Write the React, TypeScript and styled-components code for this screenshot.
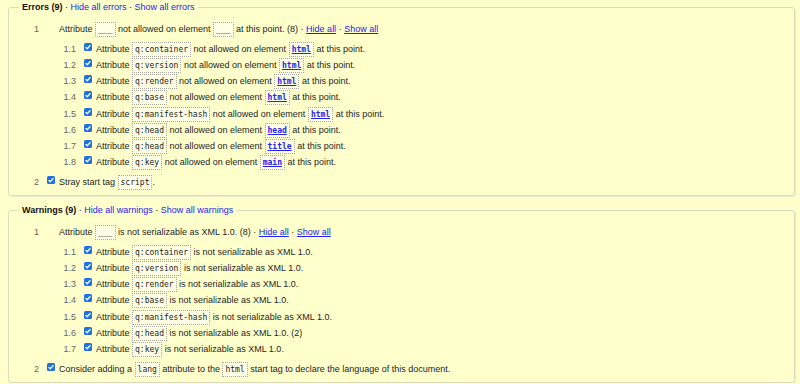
import styled, { createGlobalStyle } from "styled-components";

const GlobalStyle = createGlobalStyle`
  html, body {
    margin: 0;
    padding: 0;
    background: #ffffcc;
  }
  body {
    font-family: "Liberation Sans", Arial, sans-serif;
    font-size: 9px;
    color: #222;
  }
`;

type Part = string | { code: string; link?: boolean };

type Message = {
  num: string;
  parts: Part[];
  checked?: boolean;
};

type Group = {
  num: string;
  parts: Part[];
  count: number;
  subs: Message[];
};

const errorSubs: [string, string][] = [
  ["q:container", "html"],
  ["q:version", "html"],
  ["q:render", "html"],
  ["q:base", "html"],
  ["q:manifest-hash", "html"],
  ["q:head", "head"],
  ["q:head", "title"],
  ["q:key", "main"],
];

const warningSubs: [string, string][] = [
  ["q:container", ""],
  ["q:version", ""],
  ["q:render", ""],
  ["q:base", ""],
  ["q:manifest-hash", ""],
  ["q:head", " (2)"],
  ["q:key", ""],
];

const errorGroup: Group = {
  num: "1",
  parts: ["Attribute", { code: "___" }, "not allowed on element", { code: "___" }, "at this point."],
  count: 8,
  subs: errorSubs.map(([attr, el], i) => ({
    num: `1.${i + 1}`,
    checked: true,
    parts: ["Attribute", { code: attr }, "not allowed on element", { code: el, link: true }, "at this point."],
  })),
};

const warningGroup: Group = {
  num: "1",
  parts: ["Attribute", { code: "___" }, "is not serializable as XML 1.0."],
  count: 8,
  subs: warningSubs.map(([attr, extra], i) => ({
    num: `1.${i + 1}`,
    checked: true,
    parts: ["Attribute", { code: attr }, `is not serializable as XML 1.0.${extra}`],
  })),
};

const errorTail: Message = {
  num: "2",
  checked: true,
  parts: ["Stray start tag", { code: "script" }, "."],
};

const warningTail: Message = {
  num: "2",
  checked: true,
  parts: [
    "Consider adding a",
    { code: "lang" },
    "attribute to the",
    { code: "html" },
    "start tag to declare the language of this document.",
  ],
};

const Check = () => (
  <CheckBox>
    <svg width="8" height="8" viewBox="0 0 8 8">
      <path d="M1.6 4.1 L3.2 5.7 L6.4 2.3" fill="none" stroke="#fff" strokeWidth="1.3" />
    </svg>
  </CheckBox>
);

// words and code boxes joined by single spaces, no space before a full stop
const renderParts = (parts: Part[]) =>
  parts.map((p, i) => {
    if (typeof p === "string") {
      const noSpace = p.startsWith(".") || p.startsWith(" ");
      return (
        <span key={i}>
          {i > 0 && !noSpace ? " " : ""}
          {p}
        </span>
      );
    }
    return (
      <span key={i}>
        {i > 0 ? " " : ""}
        <Code>{p.link ? <CodeLink>{p.code}</CodeLink> : p.code}</Code>
      </span>
    );
  });

const Row = ({ msg, sub }: { msg: Message; sub?: boolean }) => (
  <RowLine sub={sub}>
    <Num>{msg.num}</Num>
    <CheckSlot>{msg.checked && <Check />}</CheckSlot>
    <Text>{renderParts(msg.parts)}</Text>
  </RowLine>
);

const Section = ({
  title,
  count,
  noun,
  group,
  tail,
}: {
  title: string;
  count: number;
  noun: string;
  group: Group;
  tail: Message;
}) => (
  <Fieldset>
    <Legend>
      <b>
        {title} ({count})
      </b>{" "}
      · <Link>Hide all {noun}</Link> · <Link>Show all {noun}</Link>
    </Legend>
    <RowLine>
      <Num>{group.num}</Num>
      <CheckSlot />
      <Text>
        {renderParts(group.parts)} ({group.count}) · <Link underline>Hide all</Link> ·{" "}
        <Link underline>Show all</Link>
      </Text>
    </RowLine>
    <SubList>
      {group.subs.map((s) => (
        <Row key={s.num} msg={s} sub />
      ))}
    </SubList>
    <Row msg={tail} />
  </Fieldset>
);

export default function App() {
  return (
    <>
      <GlobalStyle />
      <Page>
        <Section title="Errors" count={9} noun="errors" group={errorGroup} tail={errorTail} />
        <Section title="Warnings" count={9} noun="warnings" group={warningGroup} tail={warningTail} />
      </Page>
    </>
  );
}

const Page = styled.div`
  display: flex;
  flex-direction: column;
  gap: 7px;
  padding: 0 5px 0 8px;
`;

const Fieldset = styled.fieldset`
  margin: 0;
  padding: 6.5px 0 4.5px 0;
  border: 1px solid #dcdcbc;
  border-radius: 3px;
  box-shadow: 1px 1px 0 #ececcc;
  min-width: 0;
`;

const Legend = styled.legend`
  margin-left: 10px;
  padding: 0 3px;
  line-height: 14px;
  color: #111;
  b {
    font-weight: 700;
  }
`;

const Link = styled.a<{ underline?: boolean }>`
  color: #2424f0;
  cursor: pointer;
  text-decoration: ${(p) => (p.underline ? "underline" : "none")};
`;

const RowLine = styled.div<{ sub?: boolean }>`
  display: flex;
  align-items: center;
  height: 16.25px;
  padding-left: ${(p) => (p.sub ? 37 : 0)}px;
  white-space: nowrap;
`;

const SubList = styled.div`
  display: flex;
  flex-direction: column;
  margin: 3.75px 0;
`;

const Num = styled.span`
  width: 30px;
  text-align: right;
  color: #666;
  flex-shrink: 0;
`;

const CheckSlot = styled.span`
  width: 20px;
  flex-shrink: 0;
  display: flex;
  justify-content: flex-end;
  padding-right: 4px;
  box-sizing: border-box;
`;

const CheckBox = styled.span`
  width: 8px;
  height: 8px;
  border-radius: 1.5px;
  background: #1f6fe5;
  display: inline-flex;
  margin-top: -4px;
`;

const Text = styled.span`
  color: #1e1e1e;
`;

const Code = styled.code`
  font-family: "DejaVu Sans Mono", monospace;
  font-size: 8px;
  border: 1px dotted #a8a8a0;
  background: #ffffe6;
  padding: 2px 2px;
  color: #222;
`;

const CodeLink = styled.span`
  color: #2222ee;
  font-weight: 700;
  text-decoration: underline;
`;
